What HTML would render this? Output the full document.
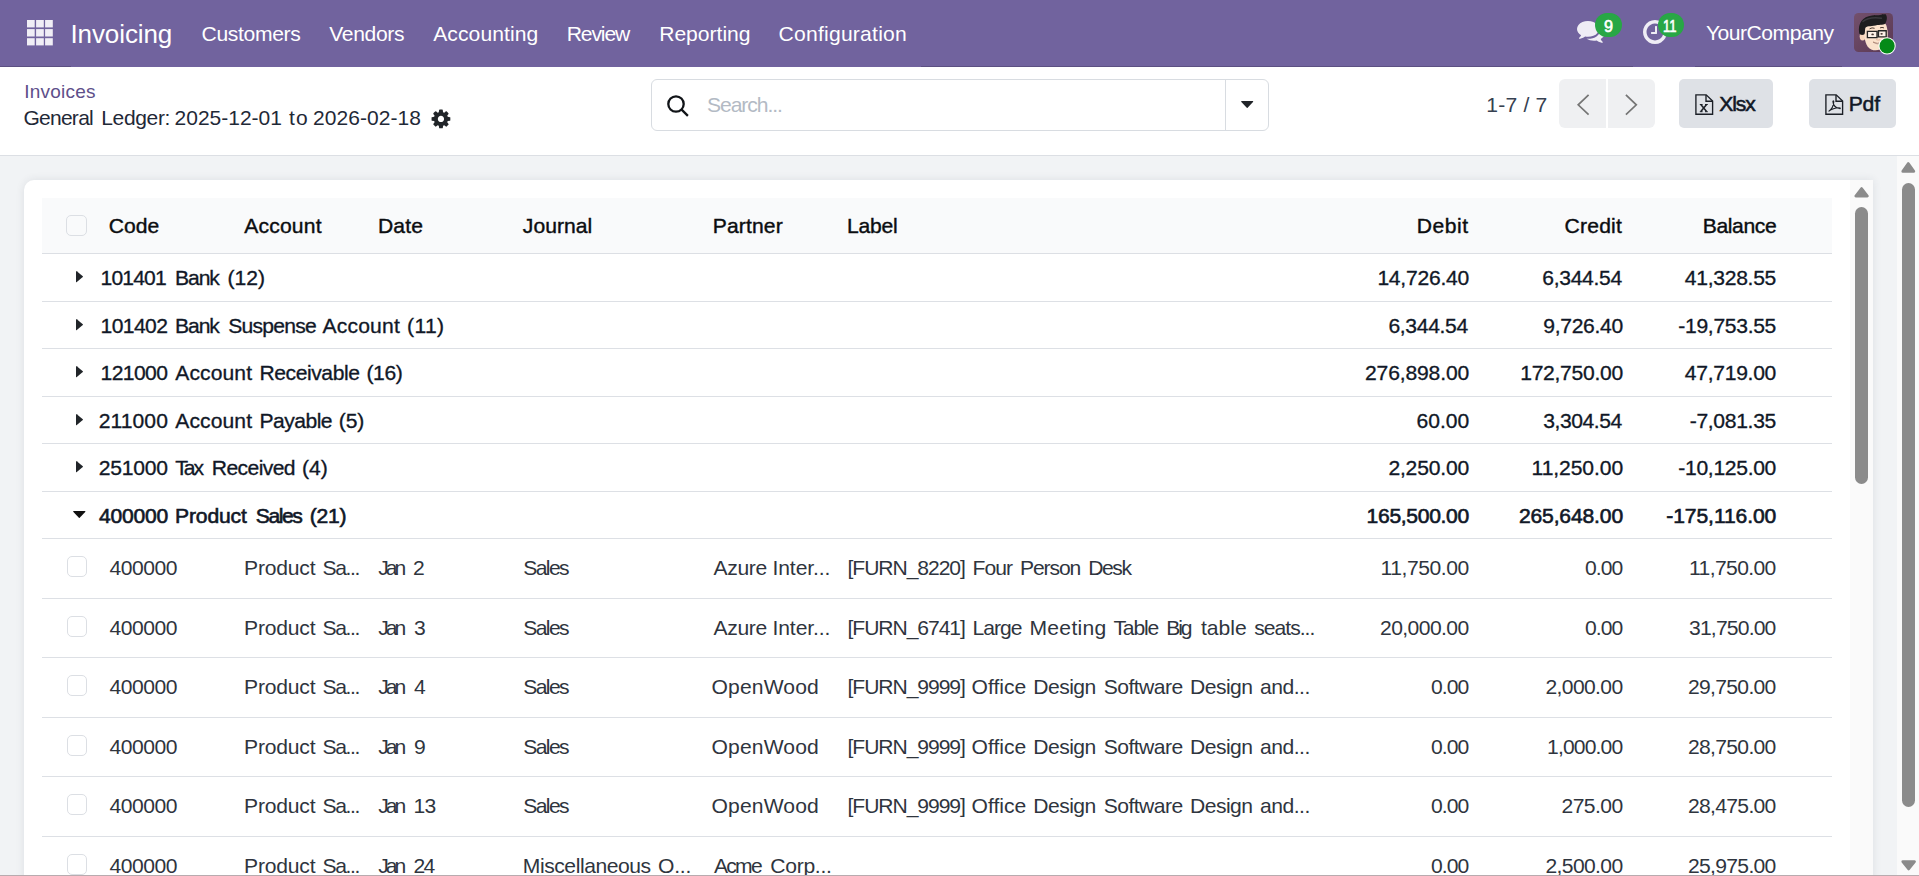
<!DOCTYPE html>
<html lang="en">
<head>
<meta charset="utf-8">
<title>Odoo - General Ledger</title>
<style>
*{box-sizing:border-box}
html,body{margin:0;padding:0}
body{width:1919px;height:876px;overflow:hidden;position:relative;background:#f1f3f5;font-family:"Liberation Sans",sans-serif;-webkit-font-smoothing:antialiased}
.a{position:absolute}
.t{position:absolute;white-space:nowrap;line-height:30px;height:30px;font-weight:400}
.t.m{-webkit-text-stroke:0.4px currentColor}
.t.m3{-webkit-text-stroke:0.55px currentColor}
.t.m2{-webkit-text-stroke:0.32px currentColor}
.t.b{-webkit-text-stroke:0.62px currentColor}
svg{position:absolute;overflow:visible}
#navbg{left:0;top:0;width:1919px;height:67px;background:#71639e}
.nb{position:absolute;top:66px;height:1px;background:#5c5082}
#cpbg{left:0;top:67px;width:1919px;height:89px;background:#fff;border-bottom:1px solid #dcdfe4}
#card{left:24px;top:180px;width:1849px;height:720px;background:#fff;border-radius:10px 0 0 0;box-shadow:0 0 8px rgba(40,50,70,.10)}
#thbg{left:42px;top:198px;width:1790px;height:56px;background:#f9fafb;border-bottom:1px solid #dcdfe4}
.ln{position:absolute;left:42px;width:1790px;height:1px;background:#dde0e5}
.cb{position:absolute;left:66.5px;width:20px;height:20.5px;border:1px solid #dcdfe4;border-radius:5px;background:transparent}
.btn{position:absolute;top:79px;height:49px;border-radius:5px;background:#dee1e6}
.pg{position:absolute;top:79px;height:49px;width:47px;background:#eff0f2}
.badge{position:absolute;background:#28a745;border-radius:13px}
.trk{position:absolute;background:#fafafa}
.thumb{position:absolute;background:#8b8b8b;border-radius:7px}
</style>
</head>
<body>

<!-- ================= NAVBAR ================= -->
<header>
<div id="navbg" class="a"></div>
<div class="nb" style="left:0;width:71px"></div><div class="nb" style="left:921px;width:712px"></div><div class="nb" style="left:1695px;width:147px"></div>
<svg style="left:26.8px;top:19.7px" width="26" height="26" viewBox="0 0 26 26" fill="#f0eef6">
 <rect x="0" y="0" width="7.7" height="7.4"/><rect x="9.1" y="0" width="7.7" height="7.4"/><rect x="18.1" y="0" width="7.7" height="7.4"/>
 <rect x="0" y="9.1" width="7.7" height="7.4"/><rect x="9.1" y="9.1" width="7.7" height="7.4"/><rect x="18.1" y="9.1" width="7.7" height="7.4"/>
 <rect x="0" y="18.2" width="7.7" height="7.2"/><rect x="9.1" y="18.2" width="7.7" height="7.2"/><rect x="18.1" y="18.2" width="7.7" height="7.2"/>
</svg>
<span class="t" style="left:70.5px;top:19.29px;font-size:26px;letter-spacing:-0.107px;color:#ffffff">Invoicing</span>
<nav>
<span class="t" style="left:201.5px;top:18.59px;font-size:21.1px;letter-spacing:-0.341px;color:#ffffff">Customers</span>
<span class="t" style="left:329.2px;top:18.59px;font-size:21.1px;letter-spacing:-0.342px;color:#ffffff">Vendors</span>
<span class="t" style="left:433.2px;top:18.59px;font-size:21.1px;letter-spacing:0.074px;color:#ffffff">Accounting</span>
<span class="t" style="left:566.7px;top:18.59px;font-size:21.1px;letter-spacing:-1.126px;color:#ffffff">Review</span>
<span class="t" style="left:659.2px;top:18.59px;font-size:21.1px;letter-spacing:-0.016px;color:#ffffff">Reporting</span>
<span class="t" style="left:778.6px;top:18.59px;font-size:21.1px;letter-spacing:0.222px;color:#ffffff">Configuration</span>
</nav>
<!-- chat icon -->
<svg style="left:1576.5px;top:16.9px" width="27.8" height="27.8" viewBox="0 0 1792 1792" fill="#efedf5"><path d="M1408 768q0 139-94 257t-256.500 186.500-353.500 68.500q-86 0-176-16-124 88-278 128-36 9-86 16h-3q-11 0-20.500-8t-11.500-21q-1-3-1-6.500t.5-6.500 2-6l2.500-5 3.500-5.500 4-5 4.500-5 4-4.500q5-6 23-25t26-29.500 22.500-29 25-38.500 20.500-44q-124-72-195-177t-71-224q0-139 94-257t256.500-186.500 353.500-68.500 353.500 68.500 256.500 186.500 94 257zm384 256q0 120-71 224.500t-195 176.500q10 24 20.500 44t25 38.500 22.500 29 26 29.500 23 25q1 1 4 4.500t4.500 5 4 5 3.500 5.500l2.500 5 2 6 .5 6.500-1 6.500q-3 14-13 22t-22 7q-50-7-86-16-154-40-278-128-90 16-176 16-271 0-472-132 58 4 88 4 161 0 309-45t264-129q125-92 192-212t67-254q0-77-23-152 129 71 204 178t75 230z"/></svg>
<div class="badge" style="left:1595px;top:12.5px;width:27px;height:24.6px"></div>
<!-- clock icon -->
<svg style="left:1641.1px;top:18px" width="28" height="28" viewBox="0 0 1792 1792" fill="#efedf5"><path d="M1024 544v448q0 14-9 23t-23 9h-320q-14 0-23-9t-9-23v-64q0-14 9-23t23-9h224v-352q0-14 9-23t23-9h64q14 0 23 9t9 23zm416 352q0-148-73-273t-198-198-273-73-273 73-198 198-73 273 73 273 198 198 273 73 273-73 198-198 73-273zm224 0q0 209-103 385.500t-279.500 279.500-385.500 103-385.500-103-279.500-279.500-103-385.500 103-385.500 279.500-279.500 385.500-103 385.500 103 279.500 279.500 103 385.500z"/></svg>
<div class="badge" style="left:1657.5px;top:12.5px;width:26.6px;height:24.9px"></div>
<span class="t" style="left:1705.9px;top:18.49px;font-size:21.1px;letter-spacing:-0.475px;color:#ffffff">YourCompany</span>
<span class="t b" style="left:1604px;top:10.79px;font-size:16.2px;letter-spacing:0px;color:#fff">9</span>
<span class="t b" style="left:1663.2px;top:10.79px;font-size:16.2px;letter-spacing:0px;color:#fff;transform:scaleX(0.8038);transform-origin:0 0">11</span>
<!-- avatar -->
<svg style="left:1854px;top:13px" width="39" height="39" viewBox="0 0 39 39">
 <defs>
  <linearGradient id="avbg" x1="0" y1="0" x2="1" y2="1"><stop offset="0" stop-color="#73506c"/><stop offset="1" stop-color="#5a3853"/></linearGradient>
  <clipPath id="avclip"><rect x="0" y="0" width="39" height="39" rx="4.5"/></clipPath>
 </defs>
 <g clip-path="url(#avclip)">
  <rect width="39" height="39" fill="url(#avbg)"/>
  <ellipse cx="8.6" cy="23.2" rx="2.9" ry="4.4" fill="#f7d6bd"/>
  <path d="M10.2 13 C12 8 30 7 32.2 12 C34.6 19 34.4 28 30 33.6 C26 38.4 17.5 38.8 13.6 33.4 C10.8 29.4 9.6 21 10.2 13Z" fill="#fbe2cc"/>
  <path d="M22 26.5 q2.2 1.2 4.2 0.2" stroke="#e8b9a0" stroke-width="1" fill="none"/>
  <path d="M5.2 20 C3.6 10 8.5 3.6 18 2.4 C23.5 1.7 27 2.6 28.8 0.9 C29.6 1.6 30.2 1.4 31.2 1.1 C33.6 3 33.2 7 31.6 10 C30.4 12.4 26.5 11.4 21.5 12.4 C16.5 13.4 12 12.6 11.2 15.4 C10.8 17.8 11.2 20.4 10.2 21.6 C8 22.4 5.7 22 5.2 20Z" fill="#1d1d1f"/>
  <path d="M9 8.5 C13 5 21 4.4 27.5 5.2" stroke="#3a3a3e" stroke-width="1.4" fill="none" stroke-linecap="round"/>
  <path d="M13.4 18.3 H23 V24.6 H13.4Z M24.5 17.7 H32.2 V23.9 H24.5Z" fill="rgba(255,255,255,0.55)" stroke="#262626" stroke-width="1.35"/>
  <ellipse cx="18.6" cy="21.4" rx="1.3" ry="0.9" fill="#4a3a36"/><ellipse cx="27.6" cy="20.8" rx="1.2" ry="0.9" fill="#4a3a36"/>
  <path d="M15.6 15.8 q2.4 -1.6 5 -0.5 M26 14.9 q2 -1 4 0" stroke="#3a2a22" stroke-width="0.9" fill="none"/>
  <path d="M19 29 q4.4 2.4 8.8 0.2 q-4.2 3.4 -8.8 -0.2Z" fill="#fff" stroke="#8a5a4a" stroke-width="0.5"/>
 </g>
 <circle cx="33.1" cy="32.9" r="8.6" fill="#fff"/>
 <circle cx="33.1" cy="32.9" r="7.6" fill="#058a18"/>
</svg>
</header>

<!-- ================= CONTROL PANEL ================= -->
<section>
<div id="cpbg" class="a"></div>
<!-- gear -->
<svg style="left:429.65px;top:107.55px" width="21.9" height="21.9" viewBox="0 0 1792 1792" fill="#212529"><path d="M1152 896q0-106-75-181t-181-75-181 75-75 181 75 181 181 75 181-75 75-181zm512-109v222q0 12-8 23t-20 13l-185 28q-19 54-39 91 35 50 107 138 10 12 10 25t-9 23q-27 37-99 108t-94 71q-12 0-26-9l-138-108q-44 23-91 38-16 136-29 186-7 28-36 28h-222q-14 0-24.500-8.500t-11.500-21.500l-28-184q-49-16-90-37l-141 107q-10 9-25 9-14 0-25-11-126-114-165-168-7-10-7-23 0-12 8-23 15-21 51-66.500t54-70.500q-27-50-41-99l-183-27q-13-2-21-12.500t-8-23.500v-222q0-12 8-23t19-13l186-28q14-46 39-92-40-57-107-138-10-12-10-24 0-10 9-23 26-36 98.500-107.500t94.500-71.500q13 0 26 10l138 107q44-23 91-38 16-136 29-186 7-28 36-28h222q14 0 24.500 8.500t11.500 21.500l28 184q49 16 90 37l142-107q9-9 24-9 13 0 25 10 129 119 165 170 7 8 7 22 0 12-8 23-15 21-51 66.500t-54 70.500q26 50 41 98l183 28q13 2 21 12.500t8 23.500z"/></svg>
<!-- search box -->
<div class="a" style="left:651px;top:79px;width:618px;height:52px;border:1px solid #d8dce1;border-radius:6px;background:#fff"></div>
<div class="a" style="left:1225px;top:80px;width:1px;height:50px;background:#d8dce1"></div>
<svg style="left:665px;top:93px" width="26" height="26" viewBox="0 0 26 26" fill="none" stroke="#111418" stroke-width="2.3"><circle cx="11" cy="11" r="7.7"/><path d="M16.4 16.4 L22.9 22.9"/></svg>
<svg style="left:1240.8px;top:101px" width="12.4" height="7.2" viewBox="0 0 12.4 7.2"><path d="M0.6 0 H11.8 Q12.6 0.2 12 1 L6.6 6.8 Q6.2 7.2 5.8 6.8 L0.4 1 Q-0.2 0.2 0.6 0Z" fill="#212529"/></svg>
<!-- pager -->
<div class="pg" style="left:1559px;border-radius:6px 0 0 6px"></div>
<div class="pg" style="left:1608px;border-radius:0 6px 6px 0"></div>
<svg style="left:1575px;top:92px" width="16" height="26" viewBox="0 0 16 26" fill="none" stroke="#757575" stroke-width="1.7"><path d="M13.6 2.8 L3.2 12.8 L13.6 22.6"/></svg>
<svg style="left:1623px;top:92px" width="16" height="26" viewBox="0 0 16 26" fill="none" stroke="#757575" stroke-width="1.7"><path d="M2.9 2.8 L13.3 12.8 L2.9 22.6"/></svg>
<!-- buttons -->
<div class="btn" style="left:1679px;width:94.3px"></div>
<div class="btn" style="left:1809px;width:87px"></div>
<svg style="left:1694.5px;top:94px" width="19" height="21" viewBox="0 0 19 21" fill="none" stroke="#1b1f26" stroke-width="1.35"><path d="M0.9 0.8 H11.2 L17.6 7 V20.2 H0.9Z"/><path d="M11 1 V7.2 H17.4"/><path d="M5.8 10.6 L11.6 17.6 M11.6 10.6 L5.8 17.6" stroke-width="1.5"/><path d="M4.8 10.5 H7.6 M10 10.5 H12.8 M4.8 17.7 H7.6 M10 17.7 H12.8" stroke-width="1"/></svg>
<svg style="left:1824.5px;top:94px" width="19" height="21" viewBox="0 0 19 21" fill="none" stroke="#1b1f26" stroke-width="1.35"><path d="M0.9 0.8 H11.2 L17.6 7 V20.2 H0.9Z"/><path d="M11 1 V7.2 H17.4"/><path d="M3.6 17.4 C6.5 15.5 8.6 11.5 8.8 7.6 C8.9 6.6 7.8 6.6 7.9 7.6 C8.2 11 10.5 13.8 14.6 14.6 C15.6 14.7 15.5 13.7 14.6 13.7 C11 13.6 7 14.6 3.6 17.4Z" stroke-width="1.05"/></svg>
<span class="t" style="left:24.2px;top:77.12px;font-size:19.0px;letter-spacing:0.243px;color:#5e4f8a">Invoices</span>
<span class="w"><span class="t" style="left:23.4px;top:103.42px;font-size:21.0px;letter-spacing:-0.724px;color:#1f2937">General </span>
<span class="t" style="left:101.2px;top:103.42px;font-size:21.0px;letter-spacing:-0.332px;color:#1f2937">Ledger: </span>
<span class="t" style="left:174.6px;top:103.42px;font-size:21.0px;letter-spacing:-0.016px;color:#1f2937">2025-12-01 </span>
<span class="t" style="left:288.9px;top:103.42px;font-size:21.0px;letter-spacing:1.266px;color:#1f2937">to </span>
<span class="t" style="left:313px;top:103.42px;font-size:21.0px;letter-spacing:0.051px;color:#1f2937">2026-02-18</span></span>
<span class="t" style="left:707px;top:90.39px;font-size:21.1px;letter-spacing:-1.069px;color:#b3bac4">Search...</span>
<span class="t" style="left:1486.2px;top:89.59px;font-size:21.1px;letter-spacing:0.222px;color:#374151">1-7 / 7</span>
<span class="t m3" style="left:1719.3px;top:88.99px;font-size:21.1px;letter-spacing:-1.101px;color:#111827">Xlsx</span>
<span class="t m3" style="left:1848.7px;top:88.99px;font-size:21.1px;letter-spacing:-0.15px;color:#111827">Pdf</span>
</section>

<!-- ================= CONTENT ================= -->
<main>
<div id="card" class="a"></div>
<div id="thbg" class="a"></div>
<div class="cb" style="top:215px;left:66.4px;width:20.2px"></div>
<span class="t m" style="left:108.8px;top:211.09px;font-size:21.1px;letter-spacing:0.001px;color:#0b0d10">Code</span>
<span class="t m" style="left:244.2px;top:211.09px;font-size:21.1px;letter-spacing:0.19px;color:#0b0d10">Account</span>
<span class="t m" style="left:378px;top:211.09px;font-size:21.1px;letter-spacing:0.125px;color:#0b0d10">Date</span>
<span class="t m" style="left:522.8px;top:211.09px;font-size:21.1px;letter-spacing:0.051px;color:#0b0d10">Journal</span>
<span class="t m" style="left:712.75px;top:211.09px;font-size:21.1px;letter-spacing:0.134px;color:#0b0d10">Partner</span>
<span class="t m" style="left:847px;top:211.09px;font-size:21.1px;letter-spacing:-0.231px;color:#0b0d10">Label</span>
<span class="t m" style="left:1416.7px;top:211.09px;font-size:21.1px;letter-spacing:0.554px;color:#0b0d10">Debit</span>
<span class="t m" style="left:1564.6px;top:211.09px;font-size:21.1px;letter-spacing:0.199px;color:#0b0d10">Credit</span>
<span class="t m" style="left:1702.75px;top:211.09px;font-size:21.1px;letter-spacing:-0.374px;color:#0b0d10">Balance</span>
<div class="grow">
<svg style="left:76.3px;top:271.2px" width="7.2" height="11.4" viewBox="0 0 7.2 11.4"><path d="M0 0.5 Q0.1 -0.2 0.8 0.3 L6.8 5.3 Q7.2 5.7 6.8 6.1 L0.8 11.1 Q0.1 11.6 0 10.9Z" fill="#212529"/></svg>
<span class="w"><span class="t m2" style="left:100.6px;top:262.99px;font-size:21.1px;letter-spacing:-0.871px;color:#111827">101401 </span>
<span class="t m2" style="left:175px;top:262.99px;font-size:21.1px;letter-spacing:-1.077px;color:#111827">Bank </span>
<span class="t m2" style="left:227.6px;top:262.99px;font-size:21.1px;letter-spacing:-0.062px;color:#111827">(12)</span></span>
<span class="t m2" style="left:1377.4px;top:262.99px;font-size:21.1px;letter-spacing:-0.251px;color:#111827">14,726.40</span>
<span class="t m2" style="left:1542.3px;top:262.99px;font-size:21.1px;letter-spacing:-0.325px;color:#111827">6,344.54</span>
<span class="t m2" style="left:1684.8px;top:262.99px;font-size:21.1px;letter-spacing:-0.289px;color:#111827">41,328.55</span>
<div class="ln" style="top:301px"></div>
</div>
<div class="grow">
<svg style="left:76.3px;top:318.7px" width="7.2" height="11.4" viewBox="0 0 7.2 11.4"><path d="M0 0.5 Q0.1 -0.2 0.8 0.3 L6.8 5.3 Q7.2 5.7 6.8 6.1 L0.8 11.1 Q0.1 11.6 0 10.9Z" fill="#212529"/></svg>
<span class="w"><span class="t m2" style="left:100.6px;top:310.99px;font-size:21.1px;letter-spacing:-0.611px;color:#111827">101402 </span>
<span class="t m2" style="left:175px;top:310.99px;font-size:21.1px;letter-spacing:-1.077px;color:#111827">Bank </span>
<span class="t m2" style="left:228.2px;top:310.99px;font-size:21.1px;letter-spacing:-0.755px;color:#111827">Suspense </span>
<span class="t m2" style="left:322.6px;top:310.99px;font-size:21.1px;letter-spacing:0.157px;color:#111827">Account </span>
<span class="t m2" style="left:407px;top:310.99px;font-size:21.1px;letter-spacing:0.36px;color:#111827">(11)</span></span>
<span class="t m2" style="left:1388.4px;top:310.99px;font-size:21.1px;letter-spacing:-0.325px;color:#111827">6,344.54</span>
<span class="t m2" style="left:1543.3px;top:310.99px;font-size:21.1px;letter-spacing:-0.325px;color:#111827">9,726.40</span>
<span class="t m2" style="left:1678.3px;top:310.99px;font-size:21.1px;letter-spacing:-0.315px;color:#111827">-19,753.55</span>
<div class="ln" style="top:348px"></div>
</div>
<div class="grow">
<svg style="left:76.3px;top:366.2px" width="7.2" height="11.4" viewBox="0 0 7.2 11.4"><path d="M0 0.5 Q0.1 -0.2 0.8 0.3 L6.8 5.3 Q7.2 5.7 6.8 6.1 L0.8 11.1 Q0.1 11.6 0 10.9Z" fill="#212529"/></svg>
<span class="w"><span class="t m2" style="left:100.6px;top:357.99px;font-size:21.1px;letter-spacing:-0.611px;color:#111827">121000 </span>
<span class="t m2" style="left:175.3px;top:357.99px;font-size:21.1px;letter-spacing:0.09px;color:#111827">Account </span>
<span class="t m2" style="left:259.5px;top:357.99px;font-size:21.1px;letter-spacing:-0.436px;color:#111827">Receivable </span>
<span class="t m2" style="left:366.4px;top:357.99px;font-size:21.1px;letter-spacing:-0.362px;color:#111827">(16)</span></span>
<span class="t m2" style="left:1365px;top:357.99px;font-size:21.1px;letter-spacing:-0.149px;color:#111827">276,898.00</span>
<span class="t m2" style="left:1520.2px;top:357.99px;font-size:21.1px;letter-spacing:-0.293px;color:#111827">172,750.00</span>
<span class="t m2" style="left:1684.8px;top:357.99px;font-size:21.1px;letter-spacing:-0.289px;color:#111827">47,719.00</span>
<div class="ln" style="top:396px"></div>
</div>
<div class="grow">
<svg style="left:76.3px;top:413.7px" width="7.2" height="11.4" viewBox="0 0 7.2 11.4"><path d="M0 0.5 Q0.1 -0.2 0.8 0.3 L6.8 5.3 Q7.2 5.7 6.8 6.1 L0.8 11.1 Q0.1 11.6 0 10.9Z" fill="#212529"/></svg>
<span class="w"><span class="t m2" style="left:98.7px;top:405.99px;font-size:21.1px;letter-spacing:0.082px;color:#111827">211000 </span>
<span class="t m2" style="left:175.3px;top:405.99px;font-size:21.1px;letter-spacing:0.09px;color:#111827">Account </span>
<span class="t m2" style="left:259.5px;top:405.99px;font-size:21.1px;letter-spacing:-0.533px;color:#111827">Payable </span>
<span class="t m2" style="left:338.8px;top:405.99px;font-size:21.1px;letter-spacing:-0.128px;color:#111827">(5)</span></span>
<span class="t m2" style="left:1416.4px;top:405.99px;font-size:21.1px;letter-spacing:0.011px;color:#111827">60.00</span>
<span class="t m2" style="left:1543.3px;top:405.99px;font-size:21.1px;letter-spacing:-0.468px;color:#111827">3,304.54</span>
<span class="t m2" style="left:1689.7px;top:405.99px;font-size:21.1px;letter-spacing:-0.313px;color:#111827">-7,081.35</span>
<div class="ln" style="top:443px"></div>
</div>
<div class="grow">
<svg style="left:76.3px;top:461.2px" width="7.2" height="11.4" viewBox="0 0 7.2 11.4"><path d="M0 0.5 Q0.1 -0.2 0.8 0.3 L6.8 5.3 Q7.2 5.7 6.8 6.1 L0.8 11.1 Q0.1 11.6 0 10.9Z" fill="#212529"/></svg>
<span class="w"><span class="t m2" style="left:98.7px;top:452.99px;font-size:21.1px;letter-spacing:-0.231px;color:#111827">251000 </span>
<span class="t m2" style="left:175.3px;top:452.99px;font-size:21.1px;letter-spacing:-2.089px;color:#111827">Tax </span>
<span class="t m2" style="left:211.8px;top:452.99px;font-size:21.1px;letter-spacing:-0.601px;color:#111827">Received </span>
<span class="t m2" style="left:301.9px;top:452.99px;font-size:21.1px;letter-spacing:0.022px;color:#111827">(4)</span></span>
<span class="t m2" style="left:1388.4px;top:452.99px;font-size:21.1px;letter-spacing:-0.183px;color:#111827">2,250.00</span>
<span class="t m2" style="left:1531.6px;top:452.99px;font-size:21.1px;letter-spacing:-0.093px;color:#111827">11,250.00</span>
<span class="t m2" style="left:1678.3px;top:452.99px;font-size:21.1px;letter-spacing:-0.315px;color:#111827">-10,125.00</span>
<div class="ln" style="top:491px"></div>
</div>
<div class="grow">
<svg style="left:73.3px;top:511.1px" width="12.6" height="7.2" viewBox="0 0 12.6 7.2"><path d="M0.6 0 H12 Q12.8 0.2 12.2 1 L6.7 6.8 Q6.3 7.2 5.9 6.8 L0.4 1 Q-0.2 0.2 0.6 0Z" fill="#111"/></svg>
<span class="w"><span class="t b" style="left:99.1px;top:500.69px;font-size:21.1px;letter-spacing:-0.231px;color:#111827">400000 </span>
<span class="t b" style="left:175px;top:500.69px;font-size:21.1px;letter-spacing:-0.139px;color:#111827">Product </span>
<span class="t b" style="left:255.8px;top:500.69px;font-size:21.1px;letter-spacing:-1.43px;color:#111827">Sales </span>
<span class="t b" style="left:309.8px;top:500.69px;font-size:21.1px;letter-spacing:-0.262px;color:#111827">(21)</span></span>
<span class="t b" style="left:1366.6px;top:500.69px;font-size:21.1px;letter-spacing:-0.327px;color:#111827">165,500.00</span>
<span class="t b" style="left:1518.9px;top:500.69px;font-size:21.1px;letter-spacing:-0.149px;color:#111827">265,648.00</span>
<span class="t b" style="left:1666.3px;top:500.69px;font-size:21.1px;letter-spacing:-0.1px;color:#111827">-175,116.00</span>
<div class="ln" style="top:538px"></div>
</div>
<div class="drow">
<div class="cb" style="top:556.2px"></div>
<span class="t" style="left:109.4px;top:552.69px;font-size:21.1px;letter-spacing:-0.451px;color:#2f353e">400000</span>
<span class="w"><span class="t" style="left:244px;top:552.69px;font-size:21.1px;letter-spacing:-0.189px;color:#2f353e">Product </span>
<span class="t" style="left:322.6px;top:552.69px;font-size:21.1px;letter-spacing:-1.405px;color:#2f353e">Sa...</span></span>
<span class="w"><span class="t" style="left:378.2px;top:552.69px;font-size:21.1px;letter-spacing:-2.939px;color:#2f353e">Jan </span>
<span class="t" style="left:412.9px;top:552.69px;font-size:21.1px;letter-spacing:0px;color:#2f353e">2</span></span>
<span class="t" style="left:523.3px;top:552.69px;font-size:21.1px;letter-spacing:-1.63px;color:#2f353e">Sales</span>
<span class="w"><span class="t" style="left:713.4px;top:552.69px;font-size:21.1px;letter-spacing:-0.293px;color:#2f353e">Azure </span>
<span class="t" style="left:772.5px;top:552.69px;font-size:21.1px;letter-spacing:-0.109px;color:#2f353e">Inter...</span></span>
<span class="w"><span class="t" style="left:847.5px;top:552.69px;font-size:21.1px;letter-spacing:-1.06px;color:#2f353e">[FURN_8220] </span>
<span class="t" style="left:972.5px;top:552.69px;font-size:21.1px;letter-spacing:-0.949px;color:#2f353e">Four </span>
<span class="t" style="left:1020px;top:552.69px;font-size:21.1px;letter-spacing:-1.121px;color:#2f353e">Person </span>
<span class="t" style="left:1088.25px;top:552.69px;font-size:21.1px;letter-spacing:-1.42px;color:#2f353e">Desk</span></span>
<span class="t" style="left:1380.5px;top:552.69px;font-size:21.1px;letter-spacing:-0.443px;color:#2f353e">11,750.00</span>
<span class="t" style="left:1585px;top:552.69px;font-size:21.1px;letter-spacing:-0.974px;color:#2f353e">0.00</span>
<span class="t" style="left:1689px;top:552.69px;font-size:21.1px;letter-spacing:-0.618px;color:#2f353e">11,750.00</span>
<div class="ln" style="top:598px"></div>
</div>
<div class="drow">
<div class="cb" style="top:616.2px"></div>
<span class="t" style="left:109.4px;top:612.69px;font-size:21.1px;letter-spacing:-0.451px;color:#2f353e">400000</span>
<span class="w"><span class="t" style="left:244px;top:612.69px;font-size:21.1px;letter-spacing:-0.189px;color:#2f353e">Product </span>
<span class="t" style="left:322.6px;top:612.69px;font-size:21.1px;letter-spacing:-1.405px;color:#2f353e">Sa...</span></span>
<span class="w"><span class="t" style="left:378.2px;top:612.69px;font-size:21.1px;letter-spacing:-2.939px;color:#2f353e">Jan </span>
<span class="t" style="left:413.9px;top:612.69px;font-size:21.1px;letter-spacing:0px;color:#2f353e">3</span></span>
<span class="t" style="left:523.3px;top:612.69px;font-size:21.1px;letter-spacing:-1.63px;color:#2f353e">Sales</span>
<span class="w"><span class="t" style="left:713.4px;top:612.69px;font-size:21.1px;letter-spacing:-0.293px;color:#2f353e">Azure </span>
<span class="t" style="left:772.5px;top:612.69px;font-size:21.1px;letter-spacing:-0.109px;color:#2f353e">Inter...</span></span>
<span class="w"><span class="t" style="left:847.5px;top:612.69px;font-size:21.1px;letter-spacing:-1.06px;color:#2f353e">[FURN_6741] </span>
<span class="t" style="left:972.5px;top:612.69px;font-size:21.1px;letter-spacing:-0.992px;color:#2f353e">Large </span>
<span class="t" style="left:1029.5px;top:612.69px;font-size:21.1px;letter-spacing:0.281px;color:#2f353e">Meeting </span>
<span class="t" style="left:1113.5px;top:612.69px;font-size:21.1px;letter-spacing:-1.174px;color:#2f353e">Table </span>
<span class="t" style="left:1166.25px;top:612.69px;font-size:21.1px;letter-spacing:-2.128px;color:#2f353e">Big </span>
<span class="t" style="left:1201px;top:612.69px;font-size:21.1px;letter-spacing:-0.002px;color:#2f353e">table </span>
<span class="t" style="left:1254.25px;top:612.69px;font-size:21.1px;letter-spacing:-0.984px;color:#2f353e">seats...</span></span>
<span class="t" style="left:1380px;top:612.69px;font-size:21.1px;letter-spacing:-0.576px;color:#2f353e">20,000.00</span>
<span class="t" style="left:1585px;top:612.69px;font-size:21.1px;letter-spacing:-0.974px;color:#2f353e">0.00</span>
<span class="t" style="left:1689px;top:612.69px;font-size:21.1px;letter-spacing:-0.814px;color:#2f353e">31,750.00</span>
<div class="ln" style="top:657px"></div>
</div>
<div class="drow">
<div class="cb" style="top:675.2px"></div>
<span class="t" style="left:109.4px;top:671.69px;font-size:21.1px;letter-spacing:-0.451px;color:#2f353e">400000</span>
<span class="w"><span class="t" style="left:244px;top:671.69px;font-size:21.1px;letter-spacing:-0.189px;color:#2f353e">Product </span>
<span class="t" style="left:322.6px;top:671.69px;font-size:21.1px;letter-spacing:-1.405px;color:#2f353e">Sa...</span></span>
<span class="w"><span class="t" style="left:378.2px;top:671.69px;font-size:21.1px;letter-spacing:-2.939px;color:#2f353e">Jan </span>
<span class="t" style="left:413.9px;top:671.69px;font-size:21.1px;letter-spacing:0px;color:#2f353e">4</span></span>
<span class="t" style="left:523.3px;top:671.69px;font-size:21.1px;letter-spacing:-1.63px;color:#2f353e">Sales</span>
<span class="t" style="left:711.6px;top:671.69px;font-size:21.1px;letter-spacing:0.115px;color:#2f353e">OpenWood</span>
<span class="w"><span class="t" style="left:847.5px;top:671.69px;font-size:21.1px;letter-spacing:-1.06px;color:#2f353e">[FURN_9999] </span>
<span class="t" style="left:971.5px;top:671.69px;font-size:21.1px;letter-spacing:0.004px;color:#2f353e">Office </span>
<span class="t" style="left:1033.25px;top:671.69px;font-size:21.1px;letter-spacing:-0.536px;color:#2f353e">Design </span>
<span class="t" style="left:1103.75px;top:671.69px;font-size:21.1px;letter-spacing:-0.537px;color:#2f353e">Software </span>
<span class="t" style="left:1190px;top:671.69px;font-size:21.1px;letter-spacing:-0.536px;color:#2f353e">Design </span>
<span class="t" style="left:1260px;top:671.69px;font-size:21.1px;letter-spacing:-0.483px;color:#2f353e">and...</span></span>
<span class="t" style="left:1431px;top:671.69px;font-size:21.1px;letter-spacing:-0.941px;color:#2f353e">0.00</span>
<span class="t" style="left:1545.5px;top:671.69px;font-size:21.1px;letter-spacing:-0.64px;color:#2f353e">2,000.00</span>
<span class="t" style="left:1688px;top:671.69px;font-size:21.1px;letter-spacing:-0.689px;color:#2f353e">29,750.00</span>
<div class="ln" style="top:717px"></div>
</div>
<div class="drow">
<div class="cb" style="top:735.2px"></div>
<span class="t" style="left:109.4px;top:731.69px;font-size:21.1px;letter-spacing:-0.451px;color:#2f353e">400000</span>
<span class="w"><span class="t" style="left:244px;top:731.69px;font-size:21.1px;letter-spacing:-0.189px;color:#2f353e">Product </span>
<span class="t" style="left:322.6px;top:731.69px;font-size:21.1px;letter-spacing:-1.405px;color:#2f353e">Sa...</span></span>
<span class="w"><span class="t" style="left:378.2px;top:731.69px;font-size:21.1px;letter-spacing:-2.939px;color:#2f353e">Jan </span>
<span class="t" style="left:413.9px;top:731.69px;font-size:21.1px;letter-spacing:0px;color:#2f353e">9</span></span>
<span class="t" style="left:523.3px;top:731.69px;font-size:21.1px;letter-spacing:-1.63px;color:#2f353e">Sales</span>
<span class="t" style="left:711.6px;top:731.69px;font-size:21.1px;letter-spacing:0.115px;color:#2f353e">OpenWood</span>
<span class="w"><span class="t" style="left:847.5px;top:731.69px;font-size:21.1px;letter-spacing:-1.06px;color:#2f353e">[FURN_9999] </span>
<span class="t" style="left:971.5px;top:731.69px;font-size:21.1px;letter-spacing:0.004px;color:#2f353e">Office </span>
<span class="t" style="left:1033.25px;top:731.69px;font-size:21.1px;letter-spacing:-0.536px;color:#2f353e">Design </span>
<span class="t" style="left:1103.75px;top:731.69px;font-size:21.1px;letter-spacing:-0.537px;color:#2f353e">Software </span>
<span class="t" style="left:1190px;top:731.69px;font-size:21.1px;letter-spacing:-0.536px;color:#2f353e">Design </span>
<span class="t" style="left:1260px;top:731.69px;font-size:21.1px;letter-spacing:-0.483px;color:#2f353e">and...</span></span>
<span class="t" style="left:1431px;top:731.69px;font-size:21.1px;letter-spacing:-0.941px;color:#2f353e">0.00</span>
<span class="t" style="left:1547px;top:731.69px;font-size:21.1px;letter-spacing:-0.854px;color:#2f353e">1,000.00</span>
<span class="t" style="left:1688px;top:731.69px;font-size:21.1px;letter-spacing:-0.689px;color:#2f353e">28,750.00</span>
<div class="ln" style="top:776px"></div>
</div>
<div class="drow">
<div class="cb" style="top:794.2px"></div>
<span class="t" style="left:109.4px;top:790.69px;font-size:21.1px;letter-spacing:-0.451px;color:#2f353e">400000</span>
<span class="w"><span class="t" style="left:244px;top:790.69px;font-size:21.1px;letter-spacing:-0.189px;color:#2f353e">Product </span>
<span class="t" style="left:322.6px;top:790.69px;font-size:21.1px;letter-spacing:-1.405px;color:#2f353e">Sa...</span></span>
<span class="w"><span class="t" style="left:378.2px;top:790.69px;font-size:21.1px;letter-spacing:-2.939px;color:#2f353e">Jan </span>
<span class="t" style="left:413.5px;top:790.69px;font-size:21.1px;letter-spacing:-0.731px;color:#2f353e">13</span></span>
<span class="t" style="left:523.3px;top:790.69px;font-size:21.1px;letter-spacing:-1.63px;color:#2f353e">Sales</span>
<span class="t" style="left:711.6px;top:790.69px;font-size:21.1px;letter-spacing:0.115px;color:#2f353e">OpenWood</span>
<span class="w"><span class="t" style="left:847.5px;top:790.69px;font-size:21.1px;letter-spacing:-1.06px;color:#2f353e">[FURN_9999] </span>
<span class="t" style="left:971.5px;top:790.69px;font-size:21.1px;letter-spacing:0.004px;color:#2f353e">Office </span>
<span class="t" style="left:1033.25px;top:790.69px;font-size:21.1px;letter-spacing:-0.536px;color:#2f353e">Design </span>
<span class="t" style="left:1103.75px;top:790.69px;font-size:21.1px;letter-spacing:-0.537px;color:#2f353e">Software </span>
<span class="t" style="left:1190px;top:790.69px;font-size:21.1px;letter-spacing:-0.536px;color:#2f353e">Design </span>
<span class="t" style="left:1260px;top:790.69px;font-size:21.1px;letter-spacing:-0.483px;color:#2f353e">and...</span></span>
<span class="t" style="left:1431px;top:790.69px;font-size:21.1px;letter-spacing:-0.941px;color:#2f353e">0.00</span>
<span class="t" style="left:1561.5px;top:790.69px;font-size:21.1px;letter-spacing:-0.577px;color:#2f353e">275.00</span>
<span class="t" style="left:1688px;top:790.69px;font-size:21.1px;letter-spacing:-0.689px;color:#2f353e">28,475.00</span>
<div class="ln" style="top:836px"></div>
</div>
<div class="drow">
<div class="cb" style="top:854.2px"></div>
<span class="t" style="left:109.4px;top:850.69px;font-size:21.1px;letter-spacing:-0.451px;color:#2f353e">400000</span>
<span class="w"><span class="t" style="left:244px;top:850.69px;font-size:21.1px;letter-spacing:-0.189px;color:#2f353e">Product </span>
<span class="t" style="left:322.6px;top:850.69px;font-size:21.1px;letter-spacing:-1.405px;color:#2f353e">Sa...</span></span>
<span class="w"><span class="t" style="left:378.2px;top:850.69px;font-size:21.1px;letter-spacing:-2.939px;color:#2f353e">Jan </span>
<span class="t" style="left:413.5px;top:850.69px;font-size:21.1px;letter-spacing:-1.731px;color:#2f353e">24</span></span>
<span class="w"><span class="t" style="left:522.75px;top:850.69px;font-size:21.1px;letter-spacing:-0.439px;color:#2f353e">Miscellaneous </span>
<span class="t" style="left:657.9px;top:850.69px;font-size:21.1px;letter-spacing:-0.143px;color:#2f353e">O...</span></span>
<span class="w"><span class="t" style="left:713.9px;top:850.69px;font-size:21.1px;letter-spacing:-1.729px;color:#2f353e">Acme </span>
<span class="t" style="left:770.25px;top:850.69px;font-size:21.1px;letter-spacing:-0.282px;color:#2f353e">Corp...</span></span>
<span class="t" style="left:1431px;top:850.69px;font-size:21.1px;letter-spacing:-0.941px;color:#2f353e">0.00</span>
<span class="t" style="left:1545.5px;top:850.69px;font-size:21.1px;letter-spacing:-0.64px;color:#2f353e">2,500.00</span>
<span class="t" style="left:1688px;top:850.69px;font-size:21.1px;letter-spacing:-0.689px;color:#2f353e">25,975.00</span>
</div>
</main>

<!-- ================= SCROLLBARS ================= -->
<div class="trk" style="left:1850px;top:180px;width:23px;height:696px"></div>
<svg style="left:1854px;top:186.8px" width="15.2" height="10.4" viewBox="0 0 15.2 10.4"><path d="M7.6 1.6 L13.4 9 H1.8Z" fill="#8b8b8b" stroke="#8b8b8b" stroke-width="2.8" stroke-linejoin="round"/></svg>
<div class="thumb" style="left:1854.8px;top:207px;width:13.2px;height:276.6px"></div>
<div class="trk" style="left:1897px;top:156px;width:22px;height:720px"></div>
<svg style="left:1901.2px;top:162.3px" width="14.6" height="10.9" viewBox="0 0 14.6 10.9"><path d="M7.3 1.6 L12.8 9.4 H1.8Z" fill="#8b8b8b" stroke="#8b8b8b" stroke-width="2.8" stroke-linejoin="round"/></svg>
<div class="thumb" style="left:1902px;top:183px;width:13px;height:623.8px"></div>
<svg style="left:1900.8px;top:859.8px" width="15.3" height="10.6" viewBox="0 0 15.3 10.6"><path d="M7.65 9 L13.5 1.6 H1.8Z" fill="#8b8b8b" stroke="#8b8b8b" stroke-width="2.8" stroke-linejoin="round"/></svg>
<div class="a" style="left:0;top:875px;width:1919px;height:1px;background:#b8abaf"></div>
</body>
</html>
